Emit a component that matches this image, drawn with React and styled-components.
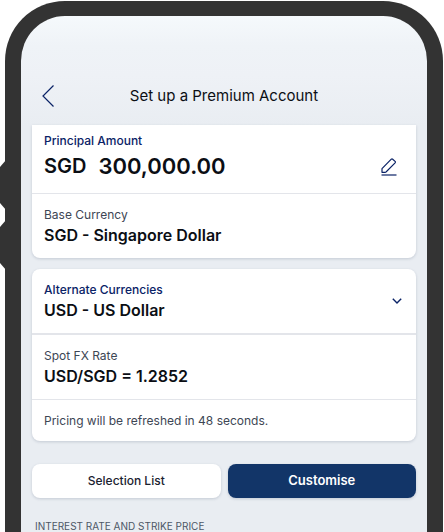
import styled, { createGlobalStyle } from 'styled-components'

const GlobalStyle = createGlobalStyle`
  * {
    box-sizing: border-box;
  }
  body {
    margin: 0;
    background: #fff;
    font-family: Inter, 'Liberation Sans', sans-serif;
    color: #0b0e14;
  }
`
const StyledPage = styled.div`
  position: relative;
  height: 100vh;
  padding: 1px 1px 0 5px;
  overflow: hidden;
`
const StyledSideKey = styled.span`
  position: absolute;
  top: ${(props) => props.$top}px;
  left: 0;
  width: 6px;
  height: 50px;
  background: #333;
  clip-path: polygon(100% 0, 0 7px, 0 43px, 100% 100%);
`
const StyledPhone = styled.div`
  min-height: 100%;
  border: 16px solid #333;
  border-top-width: 15px;
  border-bottom: none;
  border-radius: 60px 60px 0 0;
  background: linear-gradient(#f5f9fc, #eff3f7 30px, #eef1f6 60px, #e9edf2 110px);
`
const StyledHeader = styled.header`
  display: grid;
  grid-template-columns: 32px 1fr 32px;
  align-items: center;
  height: 109px;
  padding: 50px 11px 0;
`
const StyledTitle = styled.h1`
  margin: 0;
  font-size: 15px;
  line-height: 20px;
  font-weight: 400;
  text-align: center;
`
const StyledIconButton = styled.button`
  display: flex;
  justify-content: ${(props) => (props.$end ? 'flex-end' : 'center')};
  align-items: center;
  width: 32px;
  height: 30px;
  padding: 0;
  border: none;
  background: none;
  color: #0a2266;
  cursor: pointer;
`
const StyledMain = styled.main`
  padding: 0 11px;
`
const StyledCard = styled.section`
  margin-bottom: 11px;
  border-radius: ${(props) => (props.$flatTop ? '0 0 8px 8px' : '8px')};
  background: #fff;
  box-shadow: 0 1px 3px rgba(30, 45, 75, 0.18);
`
const StyledRow = styled.div`
  display: flex;
  justify-content: space-between;
  align-items: center;
  min-height: ${(props) => props.$height}px;
  padding: 0 11px 0 12px;
  border-bottom: ${(props) => props.$line || 0}px solid #e3e5ea;
`
const StyledAmountRow = styled(StyledRow)`
  align-items: flex-end;
  padding-bottom: 11px;
`
const StyledLabel = styled.div`
  font-size: 12px;
  line-height: 18px;
  font-weight: ${(props) => (props.$active ? 500 : 400)};
  color: ${(props) => (props.$active ? '#0a2266' : '#3d4654')};
`
const StyledValue = styled.div`
  font-size: 16px;
  line-height: 22px;
  font-weight: 600;
`
const StyledAmount = styled.div`
  display: flex;
  gap: 12px;
  font-size: 22px;
  line-height: 32px;
  font-weight: 600;
`
const StyledUnit = styled.span`
  font-size: 20px;
`
const StyledNote = styled.p`
  margin: 0;
  font-size: 12px;
  line-height: 18px;
  color: #3d4654;
`
const StyledActions = styled.div`
  display: grid;
  grid-template-columns: 1fr 1fr;
  gap: 7px;
  margin-top: 23px;
`
const StyledButton = styled.button`
  height: 34px;
  padding: 0 0 2px;
  border: none;
  border-radius: 8px;
  background: ${(props) => (props.$primary ? '#123568' : '#fff')};
  box-shadow: 0 1px 3px rgba(30, 45, 75, 0.18);
  color: ${(props) => (props.$primary ? '#fff' : '#1a2230')};
  font-family: inherit;
  font-size: ${(props) => (props.$primary ? 13 : 12)}px;
  font-weight: ${(props) => (props.$primary ? 600 : 500)};
  cursor: pointer;
`
const StyledCaption = styled.h2`
  margin: 19px 3px 0;
  font-size: 10px;
  line-height: 18px;
  font-weight: 400;
  color: #4d5766;
`

function Field({ label, value, active }) {
  return (
    <div>
      <StyledLabel $active={active}>{label}</StyledLabel>
      <StyledValue>{value}</StyledValue>
    </div>
  )
}

function BackIcon() {
  return (
    <svg width="12" height="22" viewBox="0 0 12 22" fill="none" stroke="currentColor" strokeWidth="1.2">
      <path d="M11.5 0.5 1 11l10.500 10.500" />
    </svg>
  )
}

function EditIcon() {
  return (
    <svg width="16" height="18" viewBox="0 0 16 18" fill="none" stroke="currentColor" strokeWidth="1.2">
      <path
        d="M1 10.700 10.300 1.200q.7-.6 1.400 0l2.400 2.200q.6.7 0 1.400L5 14l-.6.300H1z"
        strokeLinejoin="round"
      />
      <path d="M.5 17h15" />
    </svg>
  )
}

function ChevronIcon() {
  return (
    <svg width="16" height="6" viewBox="-3 0 16 6" fill="none" stroke="currentColor" strokeWidth="1.4">
      <path d="M.8.8 5 5 9.200.8" />
    </svg>
  )
}

function App() {
  return (
    <StyledPage>
      <GlobalStyle />
      <StyledSideKey $top={160} />
      <StyledSideKey $top={220} />
      <StyledPhone>
        <StyledHeader>
          <StyledIconButton type="button" aria-label="Back">
            <BackIcon />
          </StyledIconButton>
          <StyledTitle>Set up a Premium Account</StyledTitle>
        </StyledHeader>
        <StyledMain>
          <StyledCard $flatTop>
            <StyledAmountRow $height={69} $line={1}>
              <div>
                <StyledLabel $active>Principal Amount</StyledLabel>
                <StyledAmount>
                  <StyledUnit>SGD</StyledUnit>
                  <span>300,000.00</span>
                </StyledAmount>
              </div>
              <StyledIconButton type="button" aria-label="Edit amount">
                <EditIcon />
              </StyledIconButton>
            </StyledAmountRow>
            <StyledRow $height={64}>
              <Field label="Base Currency" value="SGD - Singapore Dollar" />
            </StyledRow>
          </StyledCard>
          <StyledCard>
            <StyledRow $height={66} $line={2}>
              <Field active label="Alternate Currencies" value="USD - US Dollar" />
              <StyledIconButton type="button" $end aria-label="Choose currency">
                <ChevronIcon />
              </StyledIconButton>
            </StyledRow>
            <StyledRow $height={65} $line={1}>
              <Field label="Spot FX Rate" value="USD/SGD = 1.2852" />
            </StyledRow>
            <StyledRow $height={41}>
              <StyledNote>Pricing will be refreshed in 48 seconds.</StyledNote>
            </StyledRow>
          </StyledCard>
          <StyledActions>
            <StyledButton type="button">Selection List</StyledButton>
            <StyledButton type="button" $primary>
              Customise
            </StyledButton>
          </StyledActions>
          <StyledCaption>INTEREST RATE AND STRIKE PRICE</StyledCaption>
        </StyledMain>
      </StyledPhone>
    </StyledPage>
  )
}

export default App
